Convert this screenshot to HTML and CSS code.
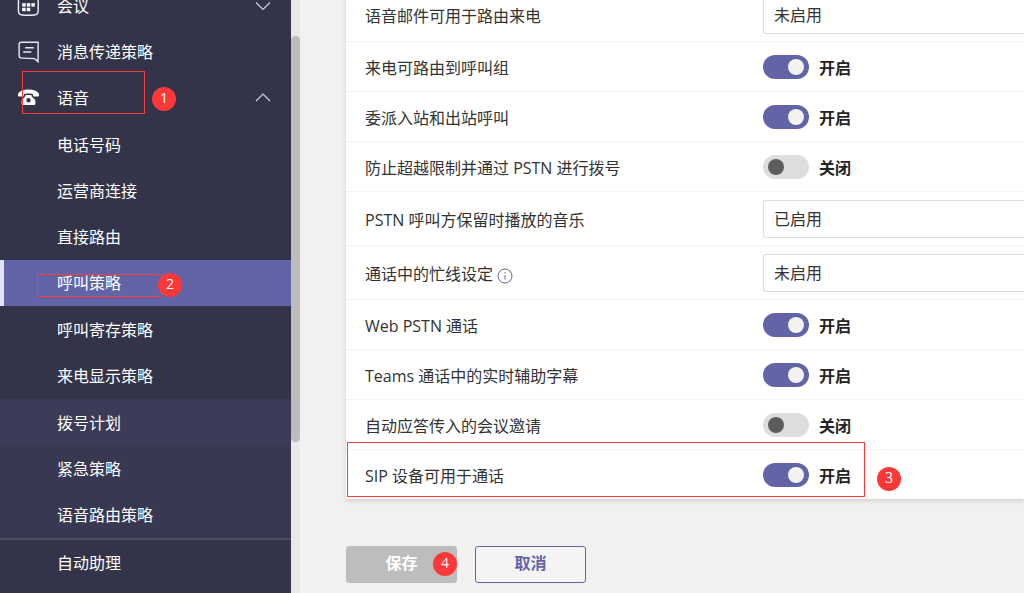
FILE: index.html
```html
<!DOCTYPE html>
<html lang="zh-CN">
<head>
<meta charset="utf-8">
<meta name="viewport" content="width=device-width, initial-scale=1">
<title>呼叫策略</title>
<link rel="stylesheet" href="styles.css">
</head>
<body>
<div class="app">
  <nav class="sidebar" aria-label="导航">
    <div class="nav-group nav-main">
      <a class="nav-item" href="#">
        <svg class="nav-icon" viewBox="0 0 24 24" fill="none" stroke="#eeeef4" stroke-width="1.5"><path d="M1.500 6V4.500a3 3 0 0 1 3-3h14.600a3 3 0 0 1 3 3V17c0 3-1.200 3.600-4 3.900-4 .4-8.600.4-12.600 0-2.800-.3-4-.9-4-3.900z"/><g fill="#fff" stroke="none"><rect x="10.200" y="8.500" width="3.600" height="3.600"/><rect x="15" y="8.500" width="3.600" height="3.600"/><rect x="5.400" y="8.500" width="3.600" height="3.600"/><rect x="5.400" y="13.300" width="3.600" height="3.600"/><rect x="10.200" y="13.300" width="3.600" height="3.600"/></g></svg>
        <span class="nav-text">会议</span>
        <svg class="chevron" viewBox="0 0 16 16" fill="none" stroke="#d0d0da" stroke-width="1.2"><path d="M1 4.500l7 7 7-7"/></svg>
      </a>
      <a class="nav-item" href="#">
        <svg class="nav-icon" viewBox="0 0 24 24" fill="none" stroke="#e6e6ee" stroke-width="1.500"><path d="M4.500 1.300h17.500v20.200L18.300 18.400 5 17.900c-1.800-.1-2.800-1-2.800-2.800V3.600c0-1.500.8-2.300 2.300-2.300z"/><path d="M8.500 7h9M6.500 11.500h8.500"/></svg>
        <span class="nav-text">消息传递策略</span>
      </a>
      <a class="nav-item" href="#" aria-expanded="true">
        <svg class="nav-icon" viewBox="0 0 24 24"><path fill="#fff" fill-rule="evenodd" d="M12 2.500c-5 0-9.600 1.600-10.800 4.500-.5 1.300-.2 2.200.3 2.700.6.500 4.700.4 5.300-.1.600-.7.300-1.700 1-2.200 1.700-.8 6.700-.8 8.400 0 .7.500.4 1.500 1 2.200.6.500 4.700.6 5.300.1.500-.5.800-1.400.3-2.700C21.600 4.100 17 2.500 12 2.500zM9 8.400c-.3 1.800-1.400 2.600-3 4-.9.800-1.200 1.400-1.200 2.400v1.800c0 1.600.7 2.200 2 2.200h10.400c1.300 0 2-.6 2-2.200v-1.800c0-1-.3-1.600-1.200-2.400-1.600-1.400-2.700-2.200-3-4zm3 3.200a2.300 2.300 0 1 1 0 4.600 2.300 2.300 0 0 1 0-4.600z"/></svg>
        <span class="nav-text">语音</span>
        <svg class="chevron" viewBox="0 0 16 16" fill="none" stroke="#d0d0da" stroke-width="1.2"><path d="M1 11l7-7 7 7"/></svg>
        <span class="mark mark-voice"></span>
        <span class="badge badge-voice">1</span>
      </a>
    </div>
    <div class="nav-group">
      <a class="nav-item" href="#"><span class="nav-text">电话号码</span></a>
      <a class="nav-item" href="#"><span class="nav-text">运营商连接</span></a>
      <a class="nav-item" href="#"><span class="nav-text">直接路由</span></a>
      <a class="nav-item selected" href="#" aria-current="page">
        <span class="nav-text">呼叫策略</span>
        <span class="mark mark-calling"></span>
        <span class="badge badge-calling">2</span>
      </a>
    </div>
    <div class="nav-group">
      <a class="nav-item" href="#"><span class="nav-text">呼叫寄存策略</span></a>
      <a class="nav-item" href="#"><span class="nav-text">来电显示策略</span></a>
    </div>
    <div class="nav-group nav-recent">
      <a class="nav-item bright" href="#"><span class="nav-text">拨号计划</span></a>
      <a class="nav-item" href="#"><span class="nav-text">紧急策略</span></a>
      <a class="nav-item" href="#"><span class="nav-text">语音路由策略</span></a>
    </div>
    <div class="nav-group nav-last">
      <a class="nav-item" href="#"><span class="nav-text">自动助理</span></a>
    </div>
  </nav>
  <div class="track"><div class="thumb"></div></div>
  <main class="content">
    <form class="policy">
      <div class="card">
        <div class="row row-select"><label for="voicemail">语音邮件可用于路由来电</label><select id="voicemail"><option>未启用</option><option>已启用</option></select></div>
        <div class="row"><label for="groups">来电可路由到呼叫组</label><div class="control"><input id="groups" class="toggle" type="checkbox" role="switch" checked><span class="state">开启</span></div></div>
        <div class="row"><label for="delegate">委派入站和出站呼叫</label><div class="control"><input id="delegate" class="toggle" type="checkbox" role="switch" checked><span class="state">开启</span></div></div>
        <div class="row"><label for="bypass">防止超越限制并通过 PSTN 进行拨号</label><div class="control"><input id="bypass" class="toggle" type="checkbox" role="switch"><span class="state">关闭</span></div></div>
        <div class="row row-select"><label for="music">PSTN 呼叫方保留时播放的音乐</label><select id="music"><option>已启用</option><option>未启用</option></select></div>
        <div class="row row-select"><label for="busy">通话中的忙线设定<svg class="info" viewBox="0 0 16 16" fill="none" stroke="#6264a7"><circle cx="8" cy="8" r="7"/><path d="M8 7v4.500M8 4.200v1.300"/></svg></label><select id="busy"><option>未启用</option><option>已启用</option></select></div>
        <div class="row"><label for="web">Web PSTN 通话</label><div class="control"><input id="web" class="toggle" type="checkbox" role="switch" checked><span class="state">开启</span></div></div>
        <div class="row"><label for="captions">Teams 通话中的实时辅助字幕</label><div class="control"><input id="captions" class="toggle" type="checkbox" role="switch" checked><span class="state">开启</span></div></div>
        <div class="row"><label for="answer">自动应答传入的会议邀请</label><div class="control"><input id="answer" class="toggle" type="checkbox" role="switch"><span class="state">关闭</span></div></div>
        <div class="row row-sip"><label for="sip">SIP 设备可用于通话</label><div class="control"><input id="sip" class="toggle" type="checkbox" role="switch" checked><span class="state">开启</span></div>
          <span class="mark mark-sip"></span><span class="badge badge-sip">3</span>
        </div>
      </div>
      <div class="actions">
        <button class="btn save" type="submit">保存<span class="badge badge-save">4</span></button>
        <button class="btn cancel" type="button">取消</button>
      </div>
    </form>
  </main>
</div>
</body>
</html>
```

FILE: styles.css
```css
* { box-sizing: border-box; }

body {
  margin: 0;
  overflow: hidden;
  background: #f2f1f0;
  color: #333;
  font: 16px/24px "Open Sans", "Noto Sans CJK SC", sans-serif;
}

.app {
  display: flex;
  height: 100vh;
  overflow: hidden;
}

/* Sidebar */
.sidebar {
  flex: 0 0 291px;
  background: #33344a;
}

.nav-main {
  margin-top: -17px;
  padding-bottom: 1px;
}

.nav-item {
  position: relative;
  display: flex;
  align-items: center;
  height: 46px;
  padding: 0 20px 0 57px;
  color: #fff;
  text-decoration: none;
}

.nav-main .nav-item { padding-left: 17px; }

.nav-icon {
  width: 23px;
  height: 23px;
  margin-right: 17px;
}

.nav-text { flex: 1; }

.chevron {
  width: 16px;
  height: 16px;
}

.nav-item.selected {
  background: #6264a7;
  border-left: 4px solid #e2e2f6;
  padding-left: 53px;
}

.nav-group + .nav-group { border-top: 1px solid #33344a; }

.nav-main + .nav-group { border-top: 0; }

.nav-group.nav-recent {
  background: #383852;
  border-top-color: #3b3b57;
}

.nav-item.bright { background: #3b3b57; }

.nav-group.nav-last { border-top: 2px solid #4e4e63; }

/* Scrollbar */
.track {
  flex: 0 0 9px;
  padding-top: 36px;
  background: #e9e9e9;
}

.thumb {
  height: 406px;
  border-radius: 5px;
  background: #bcbcbc;
}

/* Content */
.content {
  flex: 1;
  min-width: 0;
  padding-left: 46px;
}

.policy { margin-top: -12px; }

.card {
  background: #fff;
  box-shadow: 0 2px 4px rgba(0, 0, 0, 0.14);
}

.row {
  position: relative;
  display: grid;
  grid-template-columns: 398px 1fr;
  align-items: center;
  height: 50px;
  padding-left: 19px;
  border-bottom: 1px solid #f3f3f3;
}

.row label,
.state { padding-top: 2px; }

.row-select {
  height: 54px;
  padding-top: 1px;
}

.row-sip {
  height: 49px;
  border-bottom: 0;
}

.control {
  display: flex;
  align-items: center;
  gap: 10px;
}

.toggle {
  appearance: none;
  display: flex;
  align-items: center;
  width: 46px;
  height: 24px;
  margin: 0;
  padding: 0 5px;
  border-radius: 12px;
  background: #dedede;
}

.toggle::before {
  content: "";
  width: 16px;
  height: 16px;
  border-radius: 50%;
  background: #5c5c5c;
}

.toggle:checked {
  justify-content: flex-end;
  background: #6264a7;
}

.toggle:checked::before { background: #f3f2f1; }

.state {
  color: #252424;
  font-weight: 700;
}

select {
  appearance: none;
  width: 100%;
  height: 38px;
  padding: 0 10px;
  border: 1px solid #dcdcdc;
  border-right: 0;
  border-radius: 3px 0 0 3px;
  background: #fff;
  color: #333;
  font: inherit;
}

.info {
  width: 16px;
  height: 16px;
  margin-left: 4px;
  vertical-align: -4px;
}

.actions {
  display: flex;
  gap: 18px;
  margin-top: 47px;
}

.btn {
  position: relative;
  width: 111px;
  height: 37px;
  padding: 0 0 3px;
  border: 1px solid #6264a7;
  border-radius: 3px;
  background: #f5f4f4;
  color: #6264a7;
  font: inherit;
  font-weight: 700;
}

.save {
  border-color: #bdbdbd;
  background: #bdbdbd;
  color: #fff;
}

/* Numbered callouts laid over the page */
.mark {
  position: absolute;
  border: 1px solid #f83b3b;
  pointer-events: none;
}

.badge {
  position: absolute;
  width: 24px;
  height: 24px;
  border-radius: 50%;
  background: #fc3838;
  color: #fff;
  font-size: 14px;
  font-weight: 400;
  line-height: 22px;
  text-align: center;
}

.mark-voice { left: 22px; top: -4px; width: 123px; height: 43px; }
.badge-voice { left: 152px; top: 12px; }
.mark-calling { left: 33px; top: 14px; width: 125px; height: 23px; }
.badge-calling { left: 154px; top: 13px; }
.mark-sip { left: 1px; top: -8px; width: 518px; height: 55px; }
.badge-sip { left: 531px; top: 17px; font-family: "Liberation Serif", serif; font-size: 16px; }
.badge-save { right: -1px; top: 5px; }
```
